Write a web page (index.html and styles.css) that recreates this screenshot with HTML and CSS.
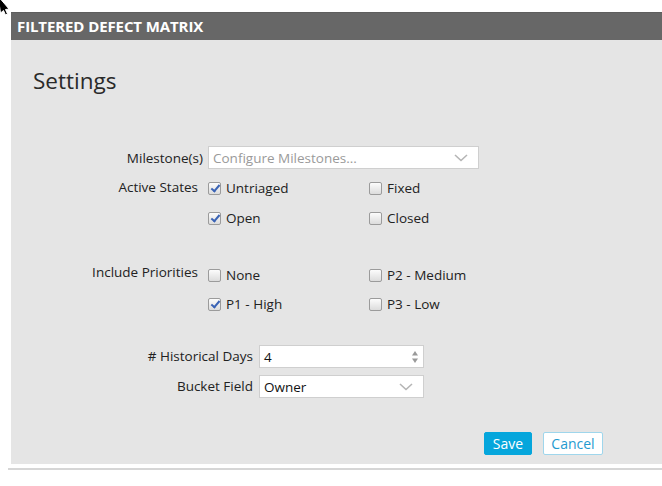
FILE: index.html
```html
<!DOCTYPE html>
<html>
<head>
<meta charset="utf-8">
<link rel="stylesheet" href="styles.css">
</head>
<body>
<div class="panel">
  <div class="panel-header">FILTERED DEFECT MATRIX</div>
  <div class="panel-body">
    <h1 class="title">Settings</h1>
    <div class="form form-a">
      <div class="label lbl-mid">Milestone(s)</div>
      <div class="select wide">
        <span class="placeholder">Configure Milestones...</span>
        <svg class="chev" width="14" height="8" viewBox="0 0 14 8"><path d="M1 1 L7 6.5 L13 1" fill="none" stroke="#b5b5b5" stroke-width="1.6"/></svg>
      </div>

      <div class="label lbl-top">Active States</div>
      <div class="checks">
        <label class="check"><span class="box on"></span>Untriaged</label>
        <label class="check"><span class="box"></span>Fixed</label>
        <label class="check"><span class="box on"></span>Open</label>
        <label class="check"><span class="box"></span>Closed</label>
      </div>

      <div class="label lbl-top prio-label">Include Priorities</div>
      <div class="checks prio">
        <label class="check"><span class="box"></span>None</label>
        <label class="check"><span class="box"></span>P2 - Medium</label>
        <label class="check"><span class="box on"></span>P1 - High</label>
        <label class="check"><span class="box"></span>P3 - Low</label>
      </div>
    </div>

    <div class="form form-b">
      <div class="label lbl-mid"># Historical Days</div>
      <div class="input num">
        <span class="val">4</span>
        <svg class="spin" width="8" height="18" viewBox="0 0 8 18"><path d="M4 3 L7 7.5 L1 7.5 Z" fill="#9a9a9a"/><path d="M4 15 L7 10.5 L1 10.5 Z" fill="#9a9a9a"/></svg>
      </div>
      <div class="label lbl-mid">Bucket Field</div>
      <div class="select">
        <span class="val">Owner</span>
        <svg class="chev" width="14" height="8" viewBox="0 0 14 8"><path d="M1 1 L7 6.5 L13 1" fill="none" stroke="#b5b5b5" stroke-width="1.6"/></svg>
      </div>
    </div>

    <div class="actions">
      <button class="btn btn-primary">Save</button>
      <button class="btn btn-secondary">Cancel</button>
    </div>
  </div>
</div>
<div class="rule"></div>
<svg class="cursor" width="12" height="16" viewBox="0 0 12 16"><path d="M-2 -4 L9 9 L5.5 9.5 L7.5 14 L5.5 15 L3.5 10.5 L0.5 13 Z" fill="#000" stroke="#fff" stroke-width="1"/></svg>
</body>
</html>
```

FILE: styles.css
```css
html, body {
  margin: 0;
  padding: 0;
  background: #ffffff;
  width: 662px;
  height: 486px;
  overflow: hidden;
  font-family: "Open Sans", "Noto Sans", sans-serif;
  color: #222;
}
body {
  padding-top: 12px;
  box-sizing: border-box;
  position: relative;
}
.panel {
  margin-left: 11px;
  background: #e5e5e5;
}
.panel-header {
  height: 28px;
  background: #676767;
  border-top: 1px solid #5e5e5e;
  box-sizing: border-box;
  color: #fff;
  font-family: "Open Sans", sans-serif;
  font-weight: 700;
  font-size: 15px;
  line-height: 26px;
  padding-left: 6px;
  letter-spacing: -0.1px;
}
.panel-body {
  height: 424px;
  padding: 0 0 0 22px;
  box-sizing: border-box;
  display: flex;
  flex-direction: column;
}
.title {
  margin: 26px 0 0 0;
  font-weight: 400;
  font-size: 22.5px;
  line-height: 30px;
  color: #2a2a2a;
}
.form {
  display: grid;
  align-items: start;
  font-size: 13.5px;
  color: #222;
}
.form-a {
  margin-top: 49px;
  grid-template-columns: 170px 271px;
  column-gap: 5px;
}
.form-b {
  margin-top: 32px;
  grid-template-columns: 220px 165px;
  column-gap: 6px;
  row-gap: 7px;
}
.label {
  text-align: right;
  white-space: nowrap;
}
.lbl-mid {
  line-height: 23px;
}
.form-a .label:first-child { line-height: 24px; padding-top: 1px; }
.lbl-top {
  line-height: 18px;
  padding-top: 8px;
  padding-right: 5px;
}
.prio-label { padding-top: 36px; }
.select, .input {
  height: 23px;
  background: #fff;
  border: 1px solid #cfcfcf;
  box-sizing: border-box;
  display: flex;
  align-items: center;
  justify-content: space-between;
  padding: 0 10px 0 4px;
}
.wide { height: 23px; margin-top: 1px; }
.placeholder { color: #9a9a9a; }
.val { color: #111; }
.num { padding-right: 4px; }
.checks {
  display: grid;
  grid-template-columns: 161px 110px;
  row-gap: 12px;
  padding-top: 9px;
}
.prio { padding-top: 39px; row-gap: 11px; }
.check {
  display: flex;
  align-items: center;
  gap: 5px;
  line-height: 18px;
  white-space: nowrap;
}
.box {
  width: 13px;
  height: 13px;
  box-sizing: border-box;
  border: 1px solid #9b9b9b;
  border-radius: 2px;
  background: linear-gradient(#fcfcfc, #dcdcdc);
  position: relative;
  flex: none;
}
.box.on::after {
  content: "";
  position: absolute;
  left: 3.5px;
  top: 0.5px;
  width: 3px;
  height: 7px;
  border: solid #3a63b5;
  border-width: 0 2px 2px 0;
  transform: rotate(40deg);
}
.actions {
  margin-top: auto;
  margin-bottom: 9px;
  display: flex;
  gap: 11px;
  padding-left: 451px;
}
.btn {
  font-family: "Open Sans", sans-serif;
  font-size: 14px;
  height: 23px;
  box-sizing: border-box;
  border-radius: 2px;
  padding: 0;
  line-height: 20px;
}
.btn-primary {
  width: 48px;
  background: #05a6dc;
  border: 1px solid #05a6dc;
  color: #fff;
}
.btn-secondary {
  width: 60px;
  background: #fff;
  border: 1px solid #9fd6ec;
  color: #1f9ad0;
}
.rule {
  margin: 4px 0 0 8px;
  height: 2px;
  background: #d6d6d6;
}
.cursor {
  position: absolute;
  left: 0;
  top: 0;
}
```
